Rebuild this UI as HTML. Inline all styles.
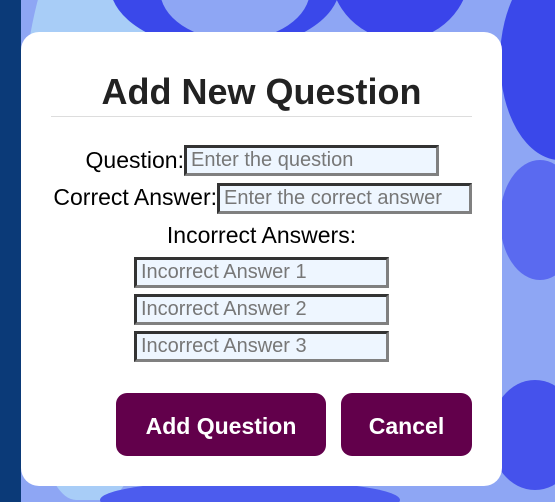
<!DOCTYPE html>
<html><head><meta charset="utf-8"><style>
html,body{margin:0;padding:0;overflow:hidden;width:555px;height:502px}
body{position:relative;background:#8ea6f4;font-family:"Liberation Sans",sans-serif}
.strip{position:absolute;left:0;top:0;width:21px;height:502px;background:#0b3a78}
.b{position:absolute;border-radius:50%}
.modal{position:absolute;left:21px;top:32px;width:481px;height:454px;background:#fff;border-radius:18px}
.title{position:absolute;left:0;width:481px;top:40px;text-align:center;font-weight:bold;font-size:36px;color:#222;line-height:40px}
.hr{position:absolute;left:30px;width:421px;top:84px;height:1px;background:#ddd}
.lbl{position:absolute;font-size:23px;color:#000;line-height:24px;white-space:nowrap}
.r{text-align:right}
.in{position:absolute;box-sizing:border-box;height:31px;border:3px solid;border-color:#333 #808080 #808080 #333;background:#eef6ff;font-family:"Liberation Sans",sans-serif;font-size:20px;color:#777;padding:0 0 0 4px;line-height:25px;white-space:nowrap;overflow:hidden}
.btn{position:absolute;top:361px;height:63px;background:#62004b;border-radius:11px;color:#fff;font-weight:bold;font-size:23px;text-align:center;line-height:66px}
</style></head><body>
<div class="b" style="left:20px;top:-60px;width:140px;height:560px;background:#a8cdf7;border-radius:40%"></div>
<div class="b" style="left:110px;top:-80px;width:230px;height:130px;background:#3a48ea"></div>
<div class="b" style="left:160px;top:-60px;width:150px;height:100px;background:#8ea6f4"></div>
<div class="b" style="left:330px;top:-100px;width:140px;height:140px;background:#3a44ea"></div>
<div class="b" style="left:500px;top:-40px;width:120px;height:200px;background:#3a48ea"></div>
<div class="b" style="left:500px;top:160px;width:80px;height:120px;background:#5a6af0"></div>
<div class="b" style="left:490px;top:380px;width:90px;height:110px;background:#4552ec"></div>
<div class="b" style="left:100px;top:480px;width:300px;height:40px;background:#4c5cee"></div>
<div class="strip"></div>
<div class="modal">
<div class="title">Add New Question</div>
<div class="hr"></div>
<div class="lbl r" style="left:0;width:163px;top:116px">Question:</div>
<div class="in" style="left:163px;top:113px;width:255px">Enter the question</div>
<div class="lbl r" style="left:0;width:196px;top:153px">Correct Answer:</div>
<div class="in" style="left:196px;top:151px;width:255px">Enter the correct answer</div>
<div class="lbl" style="left:0;width:481px;text-align:center;top:191px">Incorrect Answers:</div>
<div class="in" style="left:113px;top:225px;width:255px">Incorrect Answer 1</div>
<div class="in" style="left:113px;top:262px;width:255px">Incorrect Answer 2</div>
<div class="in" style="left:113px;top:299px;width:255px">Incorrect Answer 3</div>
<div class="btn" style="left:95px;width:210px">Add Question</div>
<div class="btn" style="left:320px;width:131px">Cancel</div>
</div>
</body></html>
